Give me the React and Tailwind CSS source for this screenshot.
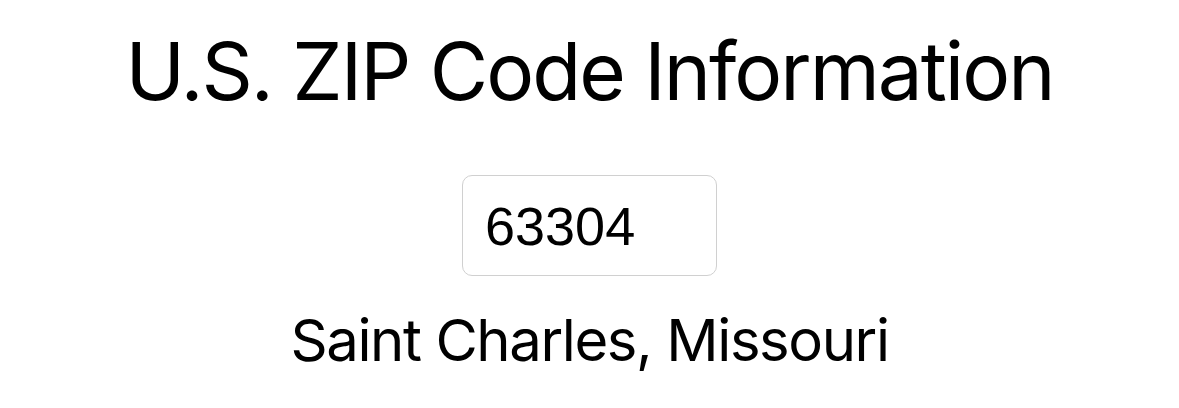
import { useState } from "react";

const App = () => {
  const [zip, setZip] = useState("63304");

  return (
    <main className="flex min-h-[408px] w-full flex-col items-center bg-white font-['Inter',sans-serif] text-black">
      <h1 className="mt-[26px] text-[80px] leading-[90px] font-normal tracking-[-2px]">
        U.S. ZIP Code Information
      </h1>
      <input
        type="text"
        value={zip}
        onChange={(event) => setZip(event.target.value)}
        className="mt-[59px] h-[101px] w-[255px] rounded-[10px] border border-[#d0d0d0] bg-white pl-[22px] font-['Liberation_Sans',sans-serif] text-[54px] text-black outline-none"
      />
      <p className="mt-[29px] text-[58px] leading-[70px] tracking-[-1.4px]">
        Saint Charles, Missouri
      </p>
    </main>
  );
};

export default App;
